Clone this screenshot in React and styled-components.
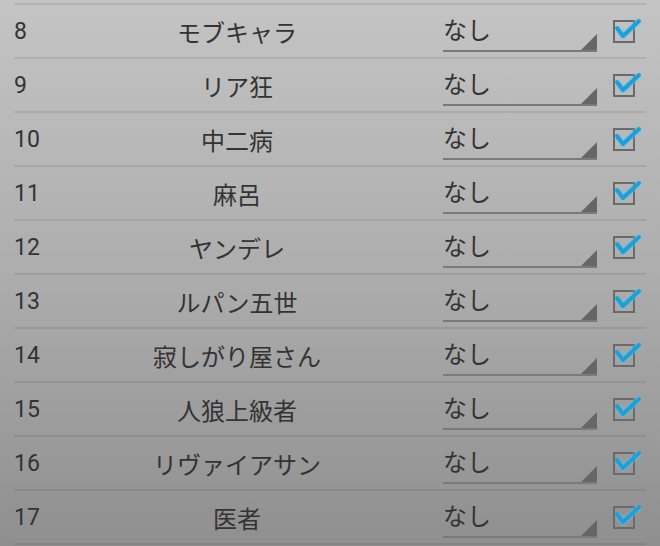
import styled, { createGlobalStyle } from "styled-components";

const GlobalStyle = createGlobalStyle`
  html, body {
    margin: 0;
    padding: 0;
  }
  body {
    width: 660px;
    height: 546px;
    overflow: hidden;
    background: linear-gradient(to bottom, #c4c4c4 0%, #adadad 50%, #8f8f8f 100%);
    font-family: "Roboto", "Noto Sans CJK JP", sans-serif;
    color: #333;
  }
`;

const roles = [
  { no: 8, name: "モブキャラ" },
  { no: 9, name: "リア狂" },
  { no: 10, name: "中二病" },
  { no: 11, name: "麻呂" },
  { no: 12, name: "ヤンデレ" },
  { no: 13, name: "ルパン五世" },
  { no: 14, name: "寂しがり屋さん" },
  { no: 15, name: "人狼上級者" },
  { no: 16, name: "リヴァイアサン" },
  { no: 17, name: "医者" },
];

const App = () => {
  return (
    <>
      <GlobalStyle />
      <List>
        {roles.map((r) => (
          <Row key={r.no}>
            <Num>{r.no}</Num>
            <Name>{r.name}</Name>
            <Spinner>なし</Spinner>
            <CheckBox>
              <svg width="32" height="30" viewBox="0 0 32 30">
                <defs>
                  <filter id={"glow" + r.no} x="-30%" y="-30%" width="160%" height="160%">
                    <feGaussianBlur stdDeviation="1.3" />
                  </filter>
                </defs>
                <polyline
                  points="5,17 11,25 27,10"
                  fill="none"
                  stroke="#5cc8f0"
                  strokeOpacity="0.6"
                  strokeWidth="6"
                  filter={`url(#glow${r.no})`}
                />
                <polyline
                  points="5,17 11,25 27,10"
                  fill="none"
                  stroke="#1f9fd6"
                  strokeWidth="4"
                  strokeLinecap="round"
                  strokeLinejoin="round"
                />
              </svg>
            </CheckBox>
          </Row>
        ))}
      </List>
    </>
  );
};

export default App;

const List = styled.div`
  margin: 3px 14px 0;
  border-top: 2px solid rgba(0, 0, 0, 0.08);
`;

const Row = styled.div`
  display: flex;
  align-items: center;
  height: 52px;
  border-bottom: 2px solid rgba(0, 0, 0, 0.08);
`;

const Num = styled.div`
  width: 65px;
  font-size: 23px;
  font-family: "Roboto", sans-serif;
`;

const Name = styled.div`
  width: 316px;
  text-align: center;
  font-size: 24px;
  font-family: "Noto Sans CJK JP", sans-serif;
`;

const Spinner = styled.div`
  position: relative;
  align-self: stretch;
  box-sizing: border-box;
  margin: 0 0 5px 48px;
  width: 154px;
  padding-top: 6px;
  border-bottom: 2px solid #7a7a7a;
  font-size: 24px;
  font-family: "Noto Sans CJK JP", sans-serif;

  &::after {
    content: "";
    position: absolute;
    right: 0;
    bottom: 0;
    width: 16px;
    height: 16px;
    background: #666;
    clip-path: polygon(100% 0, 100% 100%, 0 100%);
  }
`;

const CheckBox = styled.div`
  position: relative;
  box-sizing: border-box;
  width: 22px;
  height: 23px;
  margin: 0 0 0 16px;
  border: 2px solid #6a6a6a;

  svg {
    position: absolute;
    left: -3px;
    top: -11px;
  }
`;
